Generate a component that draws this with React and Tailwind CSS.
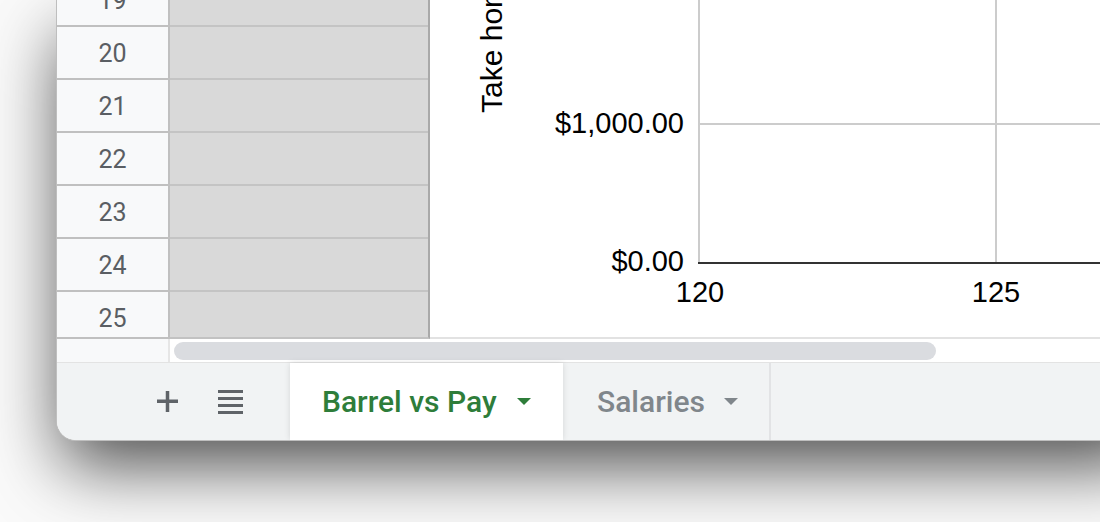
import React from "react";

const rows = [19, 20, 21, 22, 23, 24, 25];

function Chart() {
  const f = { fontFamily: '"Liberation Sans", Arial, sans-serif' };
  return (
    <svg width="770" height="337" viewBox="0 0 770 337" className="block">
      {/* grid lines */}
      <line x1="269" y1="0" x2="269" y2="263" stroke="#cccccc" strokeWidth="2" />
      <line x1="566" y1="0" x2="566" y2="263" stroke="#cccccc" strokeWidth="2" />
      <line x1="269" y1="124" x2="770" y2="124" stroke="#cccccc" strokeWidth="2" />
      {/* axis */}
      <line x1="268" y1="263" x2="770" y2="263" stroke="#333333" strokeWidth="2" />
      {/* y-axis title */}
      <text transform="translate(72,113) rotate(-90)" fontSize="30" fill="#000" style={f}>
        Take home pay
      </text>
      <text x="254" y="133" textAnchor="end" fontSize="29" fill="#000" style={f}>
        $1,000.00
      </text>
      <text x="254" y="271" textAnchor="end" fontSize="29" fill="#000" style={f}>
        $0.00
      </text>
      <text x="270" y="302" textAnchor="middle" fontSize="29" fill="#000" style={f}>
        120
      </text>
      <text x="566" y="302" textAnchor="middle" fontSize="29" fill="#000" style={f}>
        125
      </text>
    </svg>
  );
}

function Triangle({ color }) {
  return (
    <svg width="14" height="7" viewBox="0 0 14 7" className="block">
      <path d="M0 0 L14 0 L7 7 Z" fill={color} />
    </svg>
  );
}

export default function App() {
  return (
    <div className="w-[1100px] h-[522px] overflow-hidden bg-[#fafafa] relative">
      <div className="ml-[56px] w-[1100px] h-[441px] rounded-bl-[20px] overflow-hidden bg-white flex flex-col border-l border-b border-[#00000040] shadow-[0_30px_70px_-6px_rgba(0,0,0,0.7)]">
        {/* grid */}
        <div className="h-[339px] flex shrink-0">
          <div className="w-[113px] h-full bg-[#f8f9fa] border-r-2 border-b-2 border-[#c0c0c0] overflow-hidden">
            <div className="mt-[-26px]">
              {rows.map((r) => (
                <div
                  key={r}
                  className="h-[53px] pt-[3px] border-b-2 border-[#c0c0c0] flex items-center justify-center text-[25px] text-[#5a5e63]"
                  style={{ fontFamily: 'Roboto, "Liberation Sans", sans-serif' }}
                >
                  {r}
                </div>
              ))}
            </div>
          </div>
          <div className="w-[260px] h-full bg-[#d9d9d9] border-r-2 border-b-2 border-r-[#a9a9a9] border-b-[#c2c2c2] overflow-hidden">
            <div className="mt-[-26px]">
              {rows.map((r) => (
                <div key={r} className="h-[53px] border-b-2 border-[#c4c4c4]" />
              ))}
            </div>
          </div>
          <div className="flex-1 h-full bg-white border-b-2 border-[#e2e2e2] overflow-hidden">
            <Chart />
          </div>
        </div>
        {/* scrollbar row */}
        <div className="h-[23px] flex shrink-0">
          <div className="w-[113px] bg-[#f8f9fa] border-r-2 border-[#e6e6e6]" />
          <div className="flex-1 bg-white pl-[4px] pt-[3px]">
            <div className="w-[762px] h-[18px] rounded-full bg-[#dadce0]" />
          </div>
        </div>
        {/* tab bar */}
        <div
          className="flex-1 flex bg-[#f1f3f4] border-t border-[#e3e3e3]"
          style={{ fontFamily: 'Roboto, "Liberation Sans", sans-serif' }}
        >
          <div className="w-[233px] flex items-center pl-[100px] gap-[40px]">
            <svg width="21" height="21" viewBox="0 0 21 21" className="block">
              <rect x="0" y="8.5" width="21" height="3.5" fill="#5f6368" />
              <rect x="8.75" y="0" width="3.5" height="21" fill="#5f6368" />
            </svg>
            <svg width="25" height="24" viewBox="0 0 25 24" className="block">
              <rect x="0" y="0" width="25" height="3" fill="#5f6368" />
              <rect x="0" y="7" width="25" height="3" fill="#5f6368" />
              <rect x="0" y="14" width="25" height="3" fill="#5f6368" />
              <rect x="0" y="21" width="25" height="3" fill="#5f6368" />
            </svg>
          </div>
          <div className="w-[273px] bg-white flex items-center pl-[32px] gap-[20px] shadow-[0_0_6px_rgba(0,0,0,0.12)] relative">
            <span className="text-[30px] font-medium text-[#2e7d3a] leading-none">Barrel vs Pay</span>
            <Triangle color="#2e7d3a" />
          </div>
          <div className="w-[208px] flex items-center pl-[34px] gap-[19px] border-r-2 border-[#e2e3e5]">
            <span className="text-[30px] font-medium text-[#80868b] leading-none">Salaries</span>
            <Triangle color="#80868b" />
          </div>
          <div className="flex-1" />
        </div>
      </div>
    </div>
  );
}
